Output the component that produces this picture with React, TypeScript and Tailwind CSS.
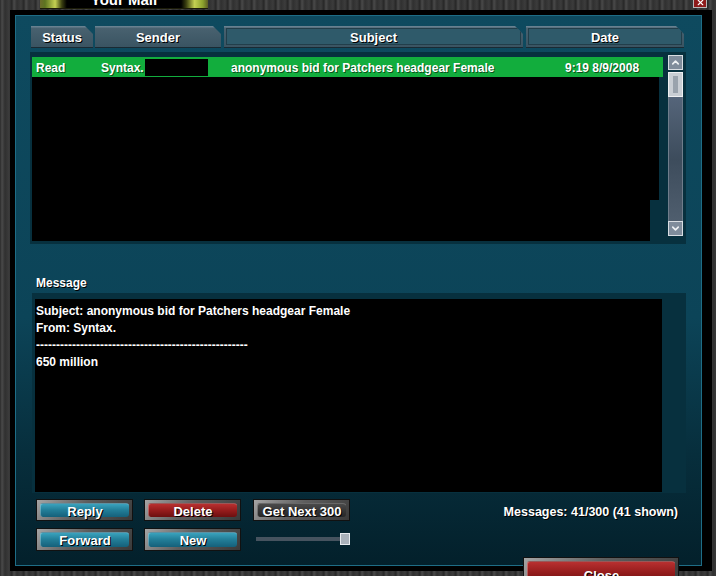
import { ChevronUp, ChevronDown, X } from "lucide-react";

type Variant = "teal" | "red" | "gray";

const innerByVariant: Record<Variant, string> = {
  teal: "bg-[linear-gradient(180deg,#3aa2bd_0%,#237f99_45%,#15607a_100%)]",
  red: "bg-[linear-gradient(180deg,#b83030_0%,#951c1c_50%,#6c0f0f_100%)]",
  gray: "bg-[linear-gradient(180deg,#4a4a4a_0%,#363636_50%,#262626_100%)]",
};

const GameButton = ({ label, variant, tall }: { label: string; variant: Variant; tall?: boolean }) => (
  <div
    className={`${tall ? "h-[23px]" : "h-[22px]"} w-[97px] border border-[#111] bg-[linear-gradient(135deg,#a5a5a5_0%,#5e5e5e_45%,#3a3a3a_100%)] p-[3px]`}
  >
    <div
      className={`flex h-full items-center justify-center rounded-[3px] border-t border-l border-white/30 ${innerByVariant[variant]} pt-[1px] text-[13px] text-white [text-shadow:1px_1px_0_#000]`}
    >
      {label}
    </div>
  </div>
);

const tabShape = "[clip-path:polygon(0_0,calc(100%-8px)_0,100%_8px,100%_100%,0_100%)]";

const HeaderTab = ({ label, width, inset }: { label: string; width: string; inset?: boolean }) => (
  <div
    className={`${width} h-[22px] ${tabShape} border-b border-[#1a2a33] bg-[linear-gradient(180deg,#6f8898_0%,#48616f_12%,#3a5462_100%)] p-[2px]`}
  >
    <div
      className={`flex h-full items-center justify-center pt-[2px] ${
        inset ? "border border-[#223e4a] bg-[#2f5a6a]" : ""
      } text-[13px] text-white [text-shadow:1px_1px_0_#000]`}
    >
      {label}
    </div>
  </div>
);

const Scrollbar = () => (
  <div className="flex h-[181px] w-[15px] flex-col">
    <div className="flex h-[15px] items-center justify-center border border-[#d8dde2] bg-[#7f8c9b]">
      <ChevronUp size={11} strokeWidth={3.5} className="text-[#eef1f4]" />
    </div>
    <div className="mt-[2px] flex h-[25px] items-center justify-center border border-[#eef0f2] bg-[#c9ced4]">
      <div className="h-[17px] w-[5px] bg-[#9aa3ad]" />
    </div>
    <div className="flex-1 border-x border-[#6f7d8b] bg-[linear-gradient(180deg,#55657a_0%,#3d4c5c_50%,#4f5e6e_100%)]" />
    <div className="flex h-[15px] items-center justify-center border border-[#d8dde2] bg-[#7f8c9b]">
      <ChevronDown size={11} strokeWidth={3.5} className="text-[#eef1f4]" />
    </div>
  </div>
);

export default function App() {
  return (
    <div className="relative h-[576px] w-[716px] overflow-hidden bg-[#343434] bg-[repeating-linear-gradient(90deg,#2a2a2a_0px,#4a4a4a_2px,#303030_5px,#3c3c3c_9px,#262626_12px)] text-[12px] font-bold text-white [font-family:'Liberation_Sans',Arial,sans-serif]">
      {/* outer black rim + teal panel */}
      <div className="ml-[10px] mt-[10px] h-[561px] w-[702px] bg-black pl-[5px] pt-[5px]">
        <div className="flex h-[551px] w-[687px] flex-col border border-[#1e6d86] bg-[linear-gradient(180deg,#0e4a5f_0%,#0c4458_55%,#072e3c_80%,#03202b_100%)]">
          {/* column headers */}
          <div className="ml-[15px] mt-[10px] flex h-[22px]">
            <HeaderTab label="Status" width="w-[62px]" />
            <div className="ml-[2px]">
              <HeaderTab label="Sender" width="w-[126px]" />
            </div>
            <div className="ml-[3px]">
              <HeaderTab label="Subject" width="w-[299px]" inset />
            </div>
            <div className="ml-[3px]">
              <HeaderTab label="Date" width="w-[158px]" inset />
            </div>
          </div>

          {/* message list */}
          <div className="ml-[14px] mt-[4px] flex h-[192px] w-[656px] bg-[#07303e]">
            <div className="pl-[2px] pt-[5px]">
              <div className="flex h-[20px] w-[631px] items-center bg-[#12ad3d] pt-[1px] [text-shadow:1px_1px_0_rgba(0,0,0,0.55)]">
                <div className="w-[69px] pl-[4px]">Read</div>
                <div className="flex w-[130px] items-center">
                  <span>Syntax.</span>
                  <span className="ml-[1px] h-[17px] w-[63px] bg-black" />
                </div>
                <div className="w-[334px]">anonymous bid for Patchers headgear Female</div>
                <div>9:19 8/9/2008</div>
              </div>
              <div className="h-[123px] w-[627px] bg-black" />
              <div className="h-[41px] w-[618px] bg-black" />
            </div>
            <div className="ml-[5px] mt-[3px]">
              <Scrollbar />
            </div>
          </div>

          {/* message body */}
          <div className="ml-[20px] mt-[31px] h-[16px] leading-[16px] [text-shadow:1px_1px_0_#000]">Message</div>
          <div className="ml-[16px] mt-[2px] h-[200px] w-[654px] bg-[#07303e] pl-[3px] pt-[6px]">
            <div className="h-[193px] w-[627px] bg-black pl-[1px] pt-[4px] leading-[17px]">
              <div>Subject: anonymous bid for Patchers headgear Female</div>
              <div>From: Syntax.</div>
              <div>-----------------------------------------------------</div>
              <div>650 million</div>
            </div>
          </div>

          {/* actions */}
          <div className="ml-[20px] mt-[6px] flex items-center">
            <GameButton label="Reply" variant="teal" />
            <div className="ml-[11px]">
              <GameButton label="Delete" variant="red" />
            </div>
            <div className="ml-[12px]">
              <GameButton label="Get Next 300" variant="gray" />
            </div>
            <div className="flex-1 pr-[23px] pt-[4px] text-right text-[12.5px] [text-shadow:1px_1px_0_#000]">
              Messages: 41/300 (41 shown)
            </div>
          </div>
          <div className="ml-[20px] mt-[6px] flex items-center">
            <GameButton label="Forward" variant="teal" tall />
            <div className="ml-[11px]">
              <GameButton label="New" variant="teal" tall />
            </div>
            <div className="ml-[12px] flex w-[97px] items-center pl-[3px]">
              <div className="h-[4px] w-[85px] bg-[#46535f]" />
              <div className="h-[12px] w-[10px] border border-[#e6eaee] bg-[#a9b1ba]" />
            </div>
          </div>
        </div>
      </div>

      {/* title tab */}
      <div className="absolute left-[40px] top-0 h-[9px] w-[168px] border-b border-[#1c1c08] bg-[linear-gradient(90deg,#6b6b2c_0%,#5d7420_3%,#c4d152_9%,#3a3f10_13%,#000_16%,#000_84%,#3a3f10_87%,#c4d152_92%,#8aa02c_97%,#5b5b24_100%)]">
        <div className="-mt-[9px] text-center text-[15px] leading-[17px] text-white">Your Mail</div>
      </div>

      {/* window close X */}
      <div className="absolute left-[693px] top-[-3px] flex h-[11px] w-[14px] items-center justify-center border border-[#b8b8b8] bg-[#8e1b1b]">
        <X size={9} strokeWidth={3} className="text-white" />
      </div>

      {/* close button */}
      <div className="absolute left-[523px] top-[557px] h-[30px] w-[156px] border border-[#111] bg-[linear-gradient(135deg,#a5a5a5_0%,#5e5e5e_45%,#3a3a3a_100%)] p-[3px]">
        <div className="flex h-full justify-center rounded-[3px] border-t border-l border-white/30 bg-[linear-gradient(180deg,#b83030_0%,#951c1c_50%,#6c0f0f_100%)] pt-[4px] text-[13px] text-white [text-shadow:1px_1px_0_#000]">
          Close
        </div>
      </div>
    </div>
  );
}
